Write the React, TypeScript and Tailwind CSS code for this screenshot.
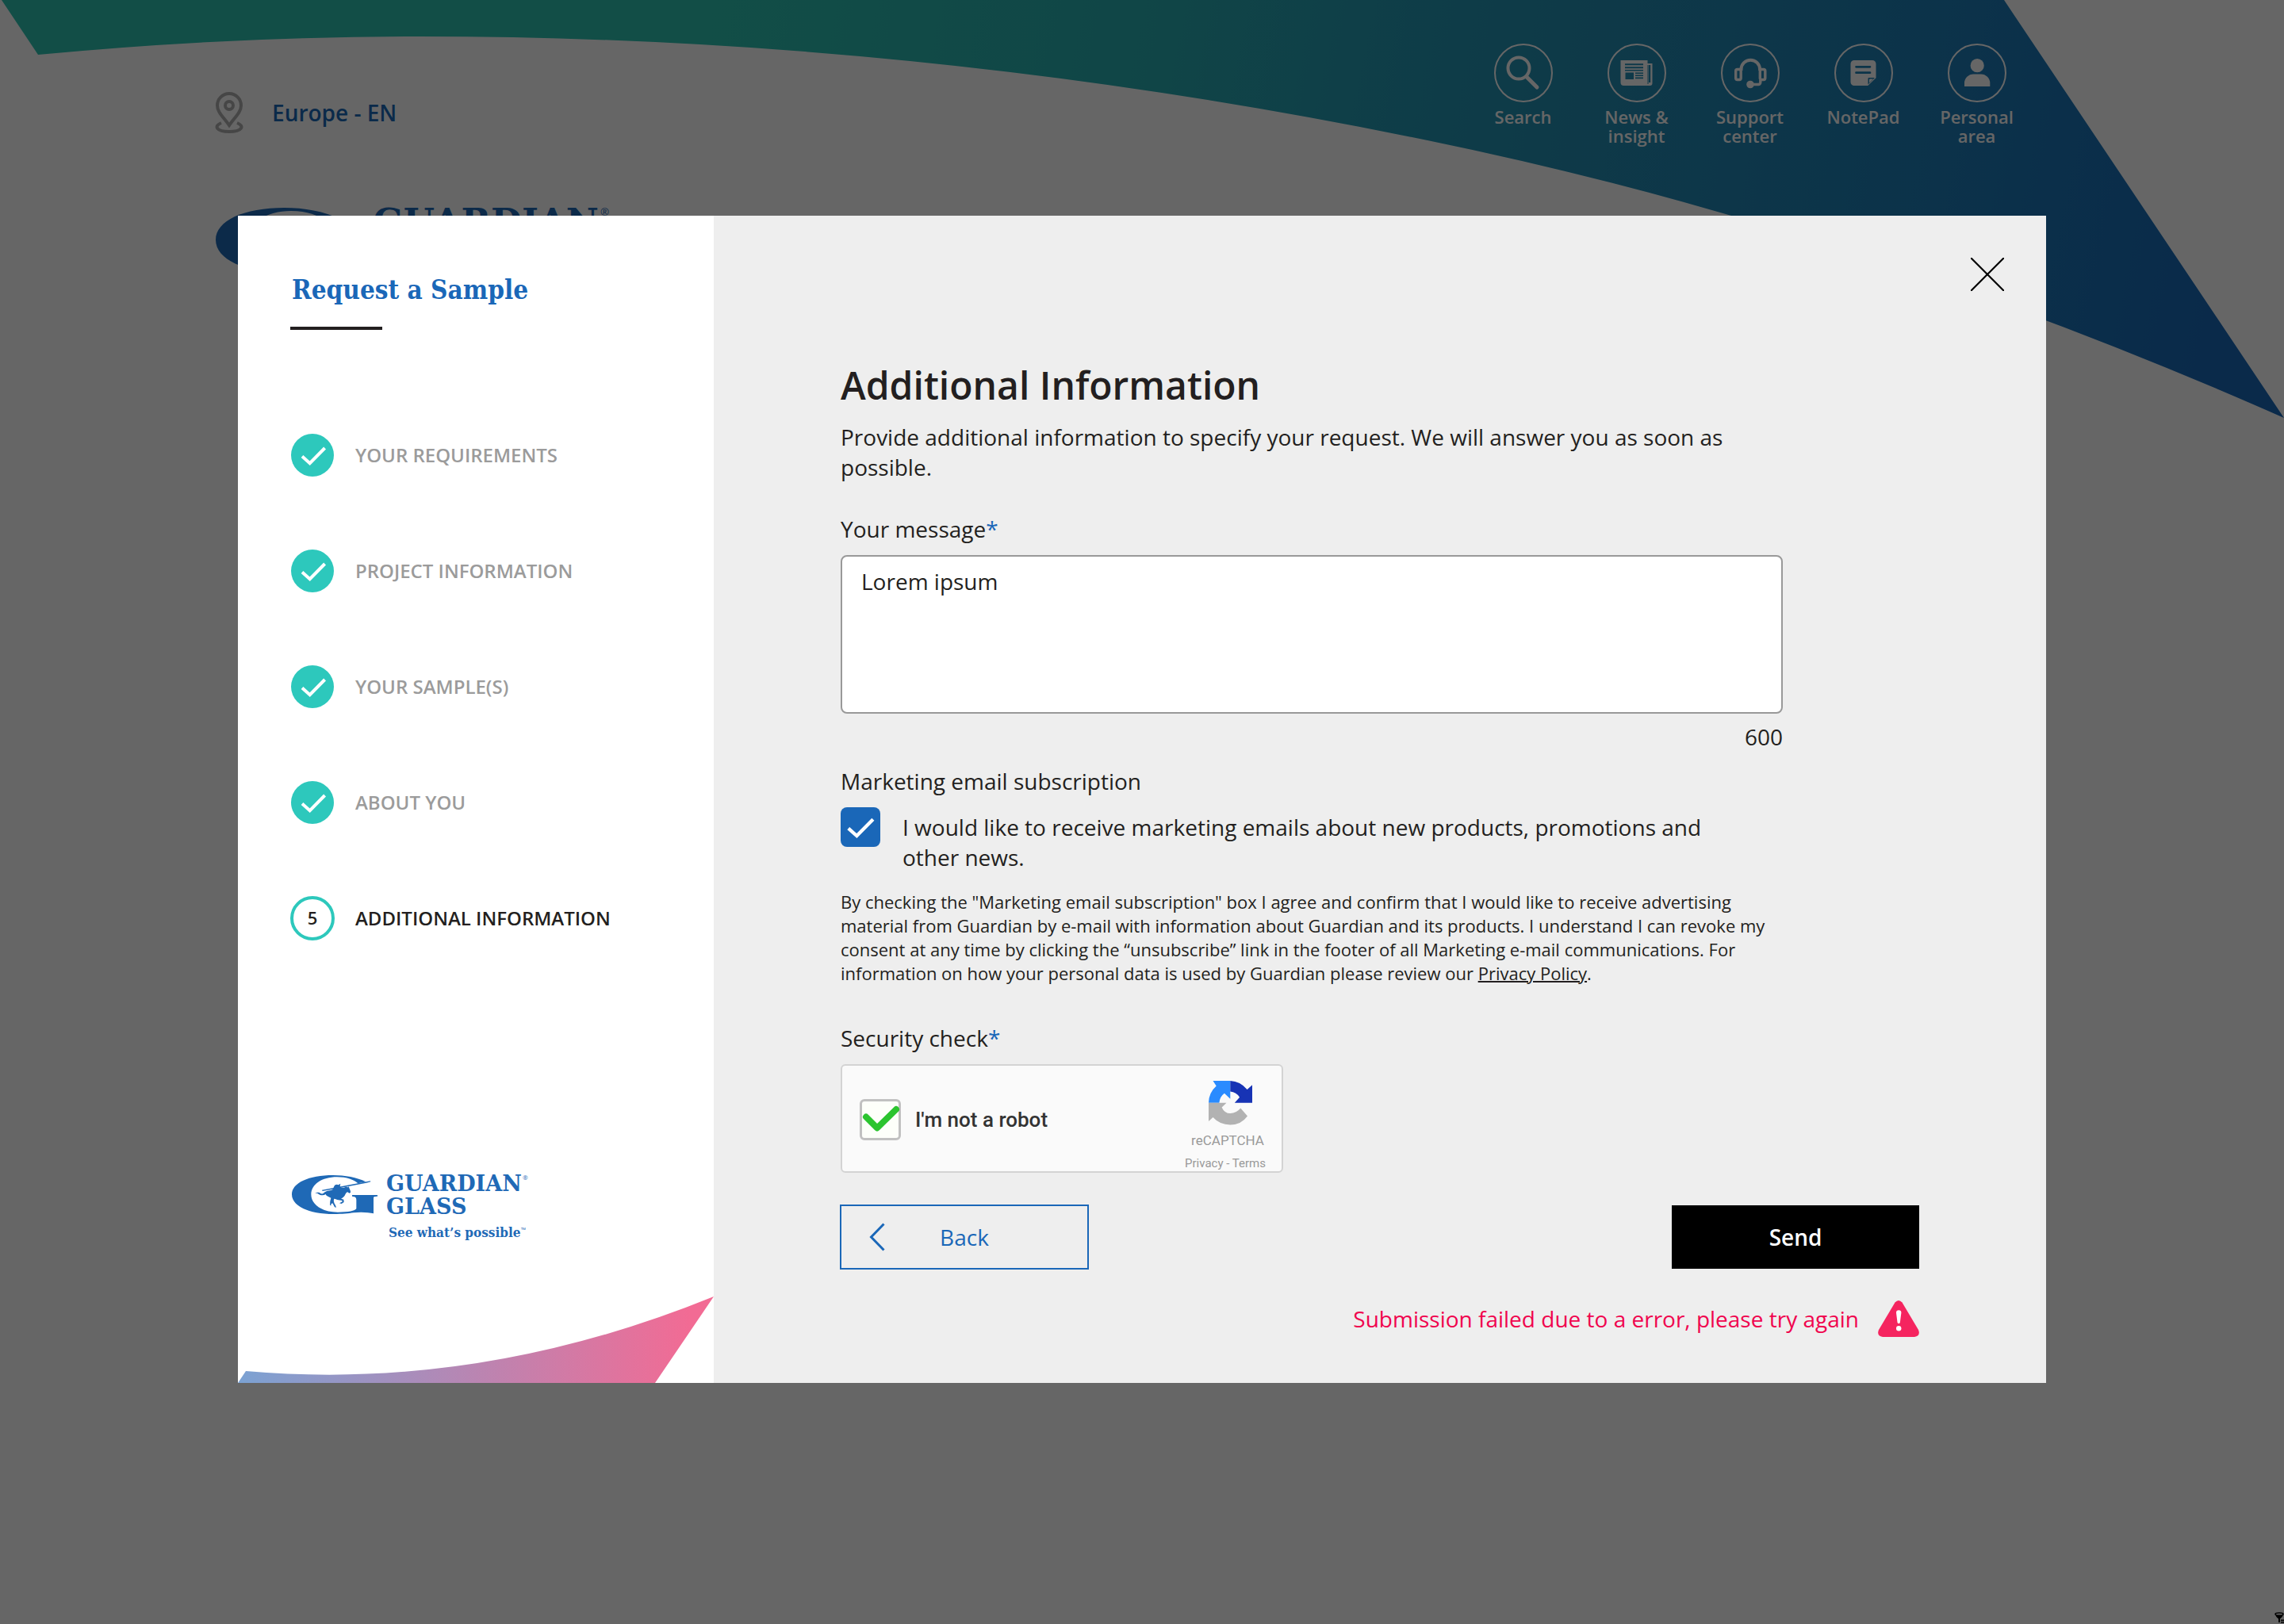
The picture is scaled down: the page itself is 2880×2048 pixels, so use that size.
import React from "react";

const STEPS = [
  { label: "YOUR REQUIREMENTS", done: true },
  { label: "PROJECT INFORMATION", done: true },
  { label: "YOUR SAMPLE(S)", done: true },
  { label: "ABOUT YOU", done: true },
  { label: "ADDITIONAL INFORMATION", done: false },
];

function SearchIcon() {
  return (
    <g fill="none" stroke="currentColor" strokeLinecap="round">
      <circle cx="31" cy="31" r="13.5" strokeWidth="4" />
      <path d="M41 42 L54 55" strokeWidth="5" />
    </g>
  );
}

function NewsIcon() {
  return (
    <g fill="currentColor" fillRule="evenodd">
      <path d="M16.5 21H50.5V53H20.5a4 4 0 0 1-4-4ZM22 25.2H45V27.2H22ZM22 29.2H45V31.2H22ZM22 33H45V34.6H22ZM22.5 36.5H33V45H22.5ZM35 36.5H45V38H35ZM35 39.6H45V41.1H35ZM35 42.6H45V44.2H35Z" />
      <path d="M50 25H56.5V50a3 3 0 0 1-3 3H49V51H51.5V27H54.2V49H52V27H50Z" />
    </g>
  );
}

function SupportIcon() {
  return (
    <g fill="none" stroke="currentColor">
      <path d="M25.5 34V32.5a11.8 11.8 0 0 1 23.6 0V34" strokeWidth="4" />
      <rect x="18.7" y="32.5" width="6.5" height="13" rx="2" strokeWidth="3.4" />
      <rect x="49.3" y="32.5" width="6.5" height="13" rx="2" strokeWidth="3.4" />
      <path d="M49.8 46V49a2.5 2.5 0 0 1-2.5 2.5H38" strokeWidth="3.4" />
      <circle cx="37" cy="51.5" r="4.8" fill="currentColor" stroke="none" />
    </g>
  );
}

function NoteIcon() {
  return (
    <g fill="currentColor" fillRule="evenodd">
      <path d="M25 21H48a4.5 4.5 0 0 1 4.5 4.5V43.2L42.3 53H25a4.5 4.5 0 0 1-4.5-4.5V25.5a4.5 4.5 0 0 1 4.5-4.5ZM27.5 28H45a1.3 1.3 0 0 1 0 2.7H27.5a1.3 1.3 0 0 1 0-2.7ZM27.5 35.3H45a1.3 1.3 0 0 1 0 2.7H27.5a1.3 1.3 0 0 1 0-2.7ZM42.5 51.5V44.3a1.2 1.2 0 0 1 1.2-1.2H51Z" />
      <path d="M44 49.5V45.4a.9.9 0 0 1 .9-.9H49Z" />
    </g>
  );
}

function PersonIcon() {
  return (
    <g fill="currentColor">
      <circle cx="37.2" cy="27.7" r="8.6" />
      <path d="M21 54V50a11.5 11.5 0 0 1 11.5-11.5H41.8A11.5 11.5 0 0 1 53.3 50V54Z" />
    </g>
  );
}

const NAV = [
  { label: "Search", icon: <SearchIcon /> },
  { label: "News & insight", icon: <NewsIcon /> },
  { label: "Support center", icon: <SupportIcon /> },
  { label: "NotePad", icon: <NoteIcon /> },
  { label: "Personal area", icon: <PersonIcon /> },
];

function Logo({ className }: { className: string }) {
  return (
    <svg viewBox="0 0 300 88" overflow="visible" className={className} role="img" aria-label="Guardian Glass" fill="#1f69b6">
      <g transform="translate(-18 -22) scale(0.33333)">
        <path d="M334 91C300 74 255 66 210 66C118 66 54 95 54 139C54 184 120 213 212 213C245 213 268 211 288 208C315 204 345 207 363 211V152C363 148 366 146 378 146V141H282V146C295 147 298 151 298 160V191C297 200 268 206 228 206C166 206 127 176 127 139C127 101 168 73 225 73C262 73 288 83 304 97Z" />
        <path d="M168 122L351 88L352 91L336 95L238 114L170 126Z" />
        <path d="M214 108C217 101 225 100 230 103L238 98L236 107L241 114L252 113C256 109 262 110 266 112L270 109L271 115C274 121 277 128 276 132L271 134L265 130C259 131 257 138 254 143C249 150 244 153 240 155L250 158L251 168L242 174L234 172L245 166L244 162L230 160C224 158 220 156 214 155C211 162 212 168 219 180L222 188L216 187L208 172L201 176L204 181L198 179L199 164L202 152C195 148 185 146 182 138C172 145 160 142 150 134L142 134C150 129 158 131 163 135C172 139 174 132 182 128C190 124 200 125 208 121Z" />
      </g>
      <g className="font-['DejaVu_Serif'] font-bold">
        <text x="119" y="20" fontSize="27">GUARDIAN</text>
        <text x="119" y="49" fontSize="27">GLASS</text>
      </g>
      <text x="291" y="6" fontSize="8" className="font-['Open_Sans']">®</text>
      <text x="122" y="78" fontSize="17" className="font-['DejaVu_Serif_Condensed','DejaVu_Serif'] font-bold">See what’s possible</text>
      <text x="289" y="72" fontSize="8" className="font-['Open_Sans']">™</text>
    </svg>
  );
}

function Tick({ className, viewBox }: { className: string; viewBox: string }) {
  return (
    <svg viewBox={viewBox} className={className} fill="none" stroke="currentColor" strokeWidth="4" aria-hidden="true">
      <path d="M14 28.5L23.7 37.2L42.6 18" />
    </svg>
  );
}

function PageHeader() {
  return (
    <div className="relative">
      <svg viewBox="0 0 2880 530" className="absolute inset-x-0 top-0 w-full" aria-hidden="true">
        <defs>
          <linearGradient id="sweep" gradientUnits="userSpaceOnUse" x1="900" y1="0" x2="2800" y2="400">
            <stop offset="0" stopColor="#2dc3b2" />
            <stop offset="0.3" stopColor="#29acb2" />
            <stop offset="0.46" stopColor="#2598b4" />
            <stop offset="0.65" stopColor="#2289b6" />
            <stop offset="0.8" stopColor="#1e7eb8" />
            <stop offset="1" stopColor="#1969b9" />
          </linearGradient>
        </defs>
        <path d="M2 0H2527L2880 527Q2340 288 1800 177Q1165 46 530 46Q289 46 48 69Z" fill="url(#sweep)" />
      </svg>
      <header className="relative flex items-start justify-between pt-[55px] pr-[316px] pl-[271px]">
        <a href="#region" className="mt-[61px] flex items-center gap-9 text-[28px] leading-[50px] font-semibold text-[#1a69b8]">
          <svg viewBox="0 0 36 52" className="h-[52px] w-9" fill="none" stroke="#b0b0b0" strokeWidth="4" aria-hidden="true">
            <path d="M18 42C10 31 3 25 3 17A15 15 0 0 1 33 17C33 25 26 31 18 42Z" />
            <circle cx="18" cy="17" r="5" />
            <path d="M8 39C-2 43 2 50 18 50C34 50 38 43 28 39" />
          </svg>
          Europe - EN
        </a>
        <nav className="flex" aria-label="Tools">
          {NAV.map((item) => (
            <a key={item.label} href="#tool" className="flex w-[143px] flex-col items-center px-5 text-center text-[22px] leading-6 font-semibold text-white">
              <svg viewBox="0 0 74 74" className="mb-1.5 size-[74px]" aria-hidden="true">
                <circle cx="37" cy="37" r="36" fill="none" stroke="currentColor" strokeWidth="2" />
                {item.icon}
              </svg>
              {item.label}
            </a>
          ))}
        </nav>
      </header>
      <Logo className="relative mt-[79px] ml-[272px] w-[500px]" />
    </div>
  );
}

function Sidebar() {
  return (
    <aside className="relative flex w-[600px] shrink-0 flex-col bg-white px-[66px] pt-[66px]">
      <h1 className="pl-0.5 font-['DejaVu_Serif_Condensed','DejaVu_Serif'] text-[33px] leading-[56px] font-bold text-[#1a67b8]">Request a Sample</h1>
      <div className="mt-[18px] h-1 w-[116px] bg-[#231f20]" />
      <ol className="mt-[130px] flex flex-col gap-[90px]">
        {STEPS.map((step, i) => (
          <li key={step.label} className="flex h-14 items-center gap-[26px] text-2xl font-semibold whitespace-nowrap">
            {step.done ? (
              <span className="flex size-14 items-center justify-center">
                <span className="size-[54px] rounded-full bg-[#2dc8bc] text-white">
                  <Tick className="size-[54px]" viewBox="0 0 54 54" />
                </span>
              </span>
            ) : (
              <span className="flex size-14 items-center justify-center rounded-full border-4 border-[#2dc8bc] text-[22px] text-[#231f20]">{i + 1}</span>
            )}
            <span className={step.done ? "text-[#9b9b9b]" : "text-[#231f20]"}>{step.label}</span>
          </li>
        ))}
      </ol>
      <Logo className="mt-auto mb-[174px] ml-0.5 w-[300px]" />
      <svg viewBox="0 0 600 110" className="absolute inset-x-0 bottom-0 w-full" aria-hidden="true">
        <defs>
          <linearGradient id="corner" x1="0" y1="0" x2="1" y2="0">
            <stop offset="0" stopColor="#7ba2d3" />
            <stop offset="0.95" stopColor="#f26b94" />
          </linearGradient>
        </defs>
        <path d="M10 95Q305 121 600 1L526 110H0Z" fill="url(#corner)" />
      </svg>
    </aside>
  );
}

function Captcha() {
  return (
    <div className="mt-3.5 flex h-[137px] w-[558px] justify-between rounded-md border-2 border-[#d3d3d3] bg-[#fafafa] font-[Roboto]">
      <label className="flex items-center gap-[18px] pt-0.5 pl-[22px] text-[26px] font-medium text-[#333]">
        <span className="relative size-[52px]">
          <input type="checkbox" defaultChecked className="block size-[52px] appearance-none rounded-md border-[3px] border-[#c1c1c1] bg-[#fdfffa]" />
          <svg viewBox="0 0 52 52" className="pointer-events-none absolute inset-0" fill="none" stroke="#2bc42f" strokeWidth="8" strokeLinecap="round" strokeLinejoin="round" aria-hidden="true">
            <path d="M8 22.5L22 36.5L46 13" />
          </svg>
        </span>
        I'm not a robot
      </label>
      <div className="flex flex-col items-center pt-[19px] pr-5 text-[#999]">
        <svg viewBox="0 0 55 56" className="ml-3 h-14 w-[55px] shrink-0" aria-hidden="true">
          <path d="M5.5 0H27.3V22.7L19.9 15.7Q14 20 13.4 27.7H0Q.2 15 9.7 6.5Z" fill="#2a8bff" />
          <path d="M27.3 0Q40 .5 48.6 11L55 5.3V27.7H32.8L39.1 20.7Q35 14 27.3 13.4Z" fill="#1733b5" />
          <path d="M0 27.7H22.5L16.6 33.4Q20 41 27.3 41Q35 41 40.3 34.6L49 44.4Q41 55.4 27.3 55.4Q14 55.4 5.5 46L0 51Z" fill="#b2b2b2" />
        </svg>
        <span className="mt-[7px] ml-1.5 text-[17px] leading-6">reCAPTCHA</span>
        <span className="mt-[7px] text-[15px] leading-5">
          <a href="#privacy">Privacy</a> - <a href="#terms">Terms</a>
        </span>
      </div>
    </div>
  );
}

function RequestForm() {
  return (
    <section className="flex grow flex-col bg-[#eee] pb-[58px]">
      <div className="flex justify-end pt-[53px] pr-[53px]">
        <button type="button" aria-label="Close">
          <svg viewBox="0 0 42 42" className="block size-[42px]" stroke="#000" strokeWidth="2.2" aria-hidden="true">
            <path d="M0 0L42 42M42 0L0 42" />
          </svg>
        </button>
      </div>
      <form className="mt-[87px] px-40 text-[28px] leading-[38px] text-[#231f20]" onSubmit={(e) => e.preventDefault()}>
        <div className="max-w-[1188px]">
          <h2 className="text-5xl leading-16 font-semibold">Additional Information</h2>
          <p className="mt-3.5">Provide additional information to specify your request. We will answer you as soon as possible.</p>
          <label htmlFor="message" className="mt-10 block">
            Your message<span className="text-[#1a67b8]">*</span>
          </label>
          <textarea
            id="message"
            defaultValue="Lorem ipsum"
            className="mt-3.5 block h-[200px] w-full resize-none rounded-lg border-2 border-[#999] bg-white px-6 py-3"
          />
          <p className="mt-2.5 text-right">600</p>
          <p className="mt-[18px]">Marketing email subscription</p>
          <div className="mt-3.5 flex items-start gap-7">
            <span className="relative size-[50px] shrink-0 text-white">
              <input id="marketing" type="checkbox" defaultChecked className="block size-[50px] appearance-none rounded-lg bg-[#1a67b8]" />
              <Tick className="pointer-events-none absolute inset-0 size-[50px]" viewBox="5 4 46 46" />
            </span>
            <label htmlFor="marketing" className="max-w-[1060px] pt-1.5">
              I would like to receive marketing emails about new products, promotions and other news.
            </label>
          </div>
          <p className="mt-[22px] text-[22px] leading-[30px]">
            By checking the "Marketing email subscription" box I agree and confirm that I would like to receive advertising material from Guardian by e-mail with
            information about Guardian and its products. I understand I can revoke my consent at any time by clicking the “unsubscribe” link in the footer of all
            Marketing e-mail communications. For information on how your personal data is used by Guardian please review our{" "}
            <a href="#policy" className="underline decoration-2">Privacy Policy</a>.
          </p>
          <p className="mt-12">
            Security check<span className="text-[#1a67b8]">*</span>
          </p>
          <Captcha />
        </div>
        <div className="mt-10 flex items-center justify-between">
          <button type="button" className="relative -ml-px h-[82px] w-[314px] border-2 border-[#1a67b8] text-[#1a67b8]">
            <svg viewBox="0 0 20 36" className="absolute top-[21px] left-[35px] h-9 w-5" fill="none" stroke="currentColor" strokeWidth="3" aria-hidden="true">
              <path d="M18.5 1.5L2.5 18L18.5 34.5" />
            </svg>
            Back
          </button>
          <button type="submit" className="h-20 w-[312px] bg-black font-semibold text-white">Send</button>
        </div>
        <div role="alert" className="mt-[39px] flex items-center justify-end gap-6 text-[#f0044e]">
          Submission failed due to a error, please try again
          <svg viewBox="0 0 52 46" className="h-[46px] w-[52px]" aria-hidden="true">
            <path d="M21.5 2.6Q26-2.4 30.5 2.6L51 37Q54 44.5 46 46H6Q-2 44.5 1 37Z" fill="#f5245f" />
            <path d="M23 15.5a3.2 3.2 0 0 1 6.4 0L27.8 28a1.7 1.7 0 0 1-3.2 0Z" fill="#fff" />
            <circle cx="26.2" cy="35.3" r="3.2" fill="#fff" />
          </svg>
        </div>
      </form>
    </section>
  );
}

export default function App() {
  return (
    <div className="relative min-h-screen overflow-hidden bg-white font-['Open_Sans',sans-serif]">
      <PageHeader />
      <div className="absolute inset-0 flex items-start bg-black/60 px-[300px] pt-[272px]">
        <div role="dialog" aria-label="Request a Sample" className="flex w-full">
          <Sidebar />
          <RequestForm />
        </div>
      </div>
      <svg viewBox="0 0 12 15" className="absolute right-0 bottom-0 h-[15px] w-3" aria-hidden="true">
        <ellipse cx="6" cy="2.5" rx="5" ry="1.6" fill="#777" stroke="#000" strokeWidth="1.5" />
        <path d="M1 3Q2 7 5 8.5V13H7V8.5Q10 7 11 3Q6 6 1 3ZM8 9.5H12V11H8ZM8 12H12V13.5H8Z" />
      </svg>
    </div>
  );
}
